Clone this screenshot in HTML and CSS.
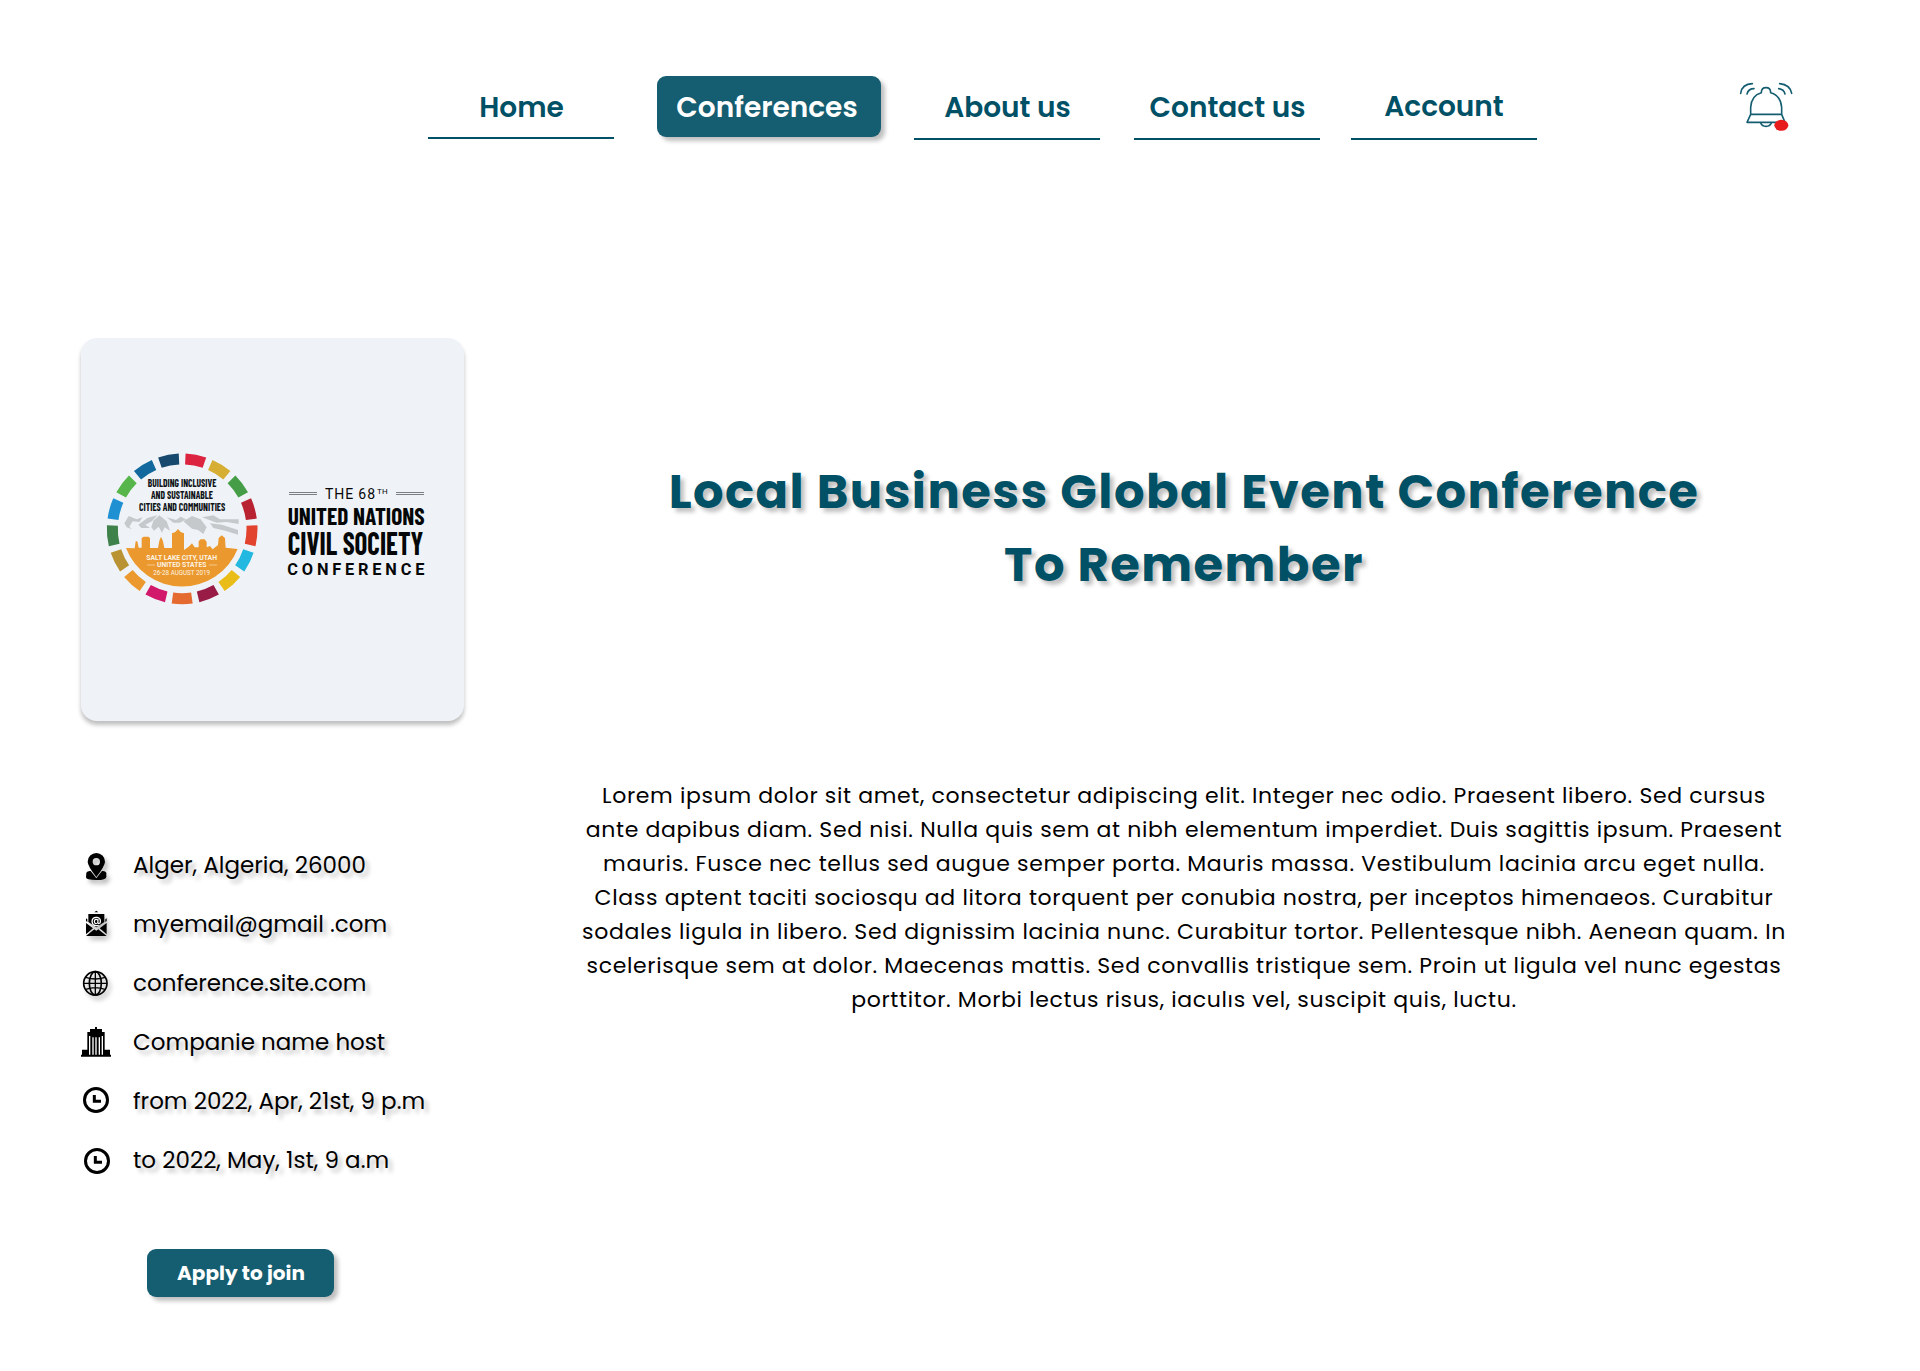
FILE: index.html
```html
<!DOCTYPE html>
<html lang="en">
<head>
<meta charset="utf-8">
<title>Local Business Global Event Conference</title>
<link rel="stylesheet" href="styles.css">
</head>
<body>
<header class="topbar">
  <nav class="nav">
    <a class="nav-item home" href="#">Home</a>
    <a class="nav-item active" href="#">Conferences</a>
    <a class="nav-item about" href="#">About us</a>
    <a class="nav-item contact" href="#">Contact us</a>
    <a class="nav-item account" href="#">Account</a>
  </nav>
  <svg class="bell" viewBox="0 0 270 225" fill="none" stroke="#155d70" stroke-width="4.8" stroke-linecap="round" stroke-linejoin="round">
    <path d="M92 133V112Q94 76 124 68Q124 53 138 53Q152 53 152 68Q182 76 185 112V133M92 133H185L195 157H81L92 133M122 159Q126 169 138 169Q150 169 154 159"/>
    <path d="M62 70Q66 42 97 41M81 72Q85 56 102 56M179 41Q210 44 215 70M176 56Q192 58 195 72"/>
    <ellipse cx="184" cy="166" rx="21" ry="16.500" fill="#e81c1c" stroke="none"/>
  </svg>
</header>
<main class="page">
  <aside class="side">
    <svg class="logo-card" viewBox="33 24 1149 1149">
      <g id="ring" fill="none" stroke-width="33"></g>
      <g fill="#c5c9cc"><path d="M163 580L176 558L200 568L218 562L208 576L188 574L178 590L186 598L170 592ZM205 584L232 564L262 556L246 574L226 584L240 594L214 594ZM250 572L268 556L290 574L300 602L284 592L276 608L266 590L252 602L244 592ZM290 562L318 570L332 560L348 568L330 578L310 578ZM340 574L366 558L392 568L410 592L400 612L384 600L366 596ZM396 562L430 556L450 568L506 568V582L470 576L440 578ZM420 580L456 584L504 600V614L466 602L430 594Z"/></g>
      <path fill="#eb992e" d="M168 654L194 655L197 634L202 634L206 653H215V624L221 620H236L240 625V654H264L268 632L273 620L279 634L283 654H306V610L316 606L324 597L332 606L342 610V660L356 650L366 640L374 652H386V634L392 628H404L410 636V652L420 648L428 658L444 645L446 624L455 616L465 624L467 653L503 657A180 180 0 0 1 168 654Z"/>
      <g class="badge-title" fill="#101417">
        <text x="233" y="472" font-size="35" textLength="206" lengthAdjust="spacingAndGlyphs">BUILDING INCLUSIVE</text>
        <text x="243" y="507" font-size="35" textLength="186" lengthAdjust="spacingAndGlyphs">AND SUSTAINABLE</text>
        <text x="207" y="543" font-size="35" textLength="259" lengthAdjust="spacingAndGlyphs">CITIES AND COMMUNITIES</text>
      </g>
      <g class="badge-place" fill="#fdf3e4">
        <text x="229" y="691" font-size="20" textLength="212" lengthAdjust="spacingAndGlyphs">SALT LAKE CITY, UTAH</text>
        <text x="261" y="712" font-size="20" textLength="148" lengthAdjust="spacingAndGlyphs">UNITED STATES</text>
        <text class="thin" x="250" y="734" font-size="19" textLength="170" lengthAdjust="spacingAndGlyphs">26-28 AUGUST 2019</text>
        <path d="M231 704H255V706H231ZM417 704H441V706H417Z"/>
      </g>
      <g class="wordmark" fill="#050708">
        <path shape-rendering="crispEdges" fill="#7c8082" d="M657 486H742V489H657ZM657 492H742V495H657ZM978 486H1063V489H978ZM978 492H1063V495H978Z"/>
        <text class="light" x="765" y="506" font-size="42" textLength="150" lengthAdjust="spacing">THE 68</text>
        <text class="light" x="921" y="492" font-size="24" textLength="32" lengthAdjust="spacing">TH</text>
        <text class="narrow" x="653" y="585" font-size="74" textLength="411" lengthAdjust="spacingAndGlyphs">UNITED NATIONS</text>
        <text class="narrow" x="653" y="675" font-size="96" textLength="407" lengthAdjust="spacingAndGlyphs">CIVIL SOCIETY</text>
        <text x="652" y="735" font-size="49" textLength="411" lengthAdjust="spacing">CONFERENCE</text>
      </g>
    </svg>
    <ul class="facts">
      <li><svg viewBox="27 -12 108 177"><path fill-rule="evenodd" d="M79 39A26 26 0 0 1 105 65Q105 77 79 111Q53 77 53 65A26 26 0 0 1 79 39ZM79 54A11 11 0 1 0 79 76A11 11 0 1 0 79 54Z"/><path d="M49 98Q52 92 62 93L79 115L96 93Q106 92 109 98V110Q109 120 79 120Q48 120 48 112Z"/></svg>Alger, Algeria, 26000</li>
      <li><svg viewBox="27 165 108 177"><path d="M73 217L79 212L85 217ZM55 222H103V246L79 262L55 246ZM48 235L52 238V246L48 243ZM110 235L106 238V246L110 243ZM48 249L69 265L48 283ZM110 249L89 265L110 283ZM48 288L73 268L79 272L85 268L110 288Z"/><text class="at" x="79" y="252" text-anchor="middle" font-size="31" fill="#fff">@</text></svg>myemail@gmail .com</li>
      <li><svg viewBox="27 342 108 177" fill="none" stroke="#000" stroke-width="5"><circle cx="76" cy="430" r="35"/><ellipse cx="76" cy="430" rx="18" ry="35"/><path d="M76 395V465M41 430H111M47 412Q76 422 105 412M47 448Q76 438 105 448" stroke-width="4"/></svg>conference.site.com</li>
      <li><svg class="flat" viewBox="27 9 108 177"><path fill-rule="evenodd" d="M75 51H81V57H96V66H104V119H120V134H123V140H33V134H36V119H52V66H60V57H75ZM57 78V134H61V78ZM67 82V134H71V82ZM76 82V134H80V82ZM86 82V134H90V82ZM95 78V134H99V78Z"/></svg>Companie name host</li>
      <li><svg class="flat" viewBox="27 186 108 177" fill="none" stroke="#000" stroke-width="9"><circle cx="78" cy="270" r="34.500"/><path d="M73 255V273.500H93"/></svg>from 2022, Apr, 21st, 9 p.m</li>
      <li><svg class="flat" viewBox="27 363 108 177" fill="none" stroke="#000" stroke-width="9"><circle cx="81" cy="453" r="34.500"/><path d="M76 438V456.500H96"/></svg>to 2022, May, 1st, 9 a.m</li>
    </ul>
    <button class="apply">Apply to join</button>
  </aside>
  <article class="content">
    <h1>Local Business Global Event Conference<br>To Remember</h1>
    <p class="body">Lorem ipsum dolor sit amet, consectetur adipiscing elit. Integer nec odio. Praesent libero. Sed cursus<br>
    ante dapibus diam. Sed nisi. Nulla quis sem at nibh elementum imperdiet. Duis sagittis ipsum. Praesent<br>
    mauris. Fusce nec tellus sed augue semper porta. Mauris massa. Vestibulum lacinia arcu eget nulla.<br>
    Class aptent taciti sociosqu ad litora torquent per conubia nostra, per inceptos himenaeos. Curabitur<br>
    sodales ligula in libero. Sed dignissim lacinia nunc. Curabitur tortor. Pellentesque nibh. Aenean quam. In<br>
    scelerisque sem at dolor. Maecenas mattis. Sed convallis tristique sem. Proin ut ligula vel nunc egestas<br>
    porttitor. Morbi lectus risus, iaculıs vel, suscipit quis, luctu.</p>
  </article>
</main>
<script src="ring.js"></script>
</body>
</html>
```
FILE: styles.css
```css
* { box-sizing: border-box; }
body {
  margin: 0;
  width: 1920px;
  height: 1371px;
  overflow: hidden;
  background: #fff;
  color: #000;
  font-family: Poppins, Inter, sans-serif;
}
.topbar { display: flex; height: 338px; padding: 70px 0 0 428px; }
.nav { display: flex; height: 70px; }
.nav-item {
  width: 186px;
  height: 69px;
  color: #005066;
  font-size: 28px;
  font-weight: 600;
  line-height: 75px;
  text-align: center;
  text-decoration: none;
  white-space: nowrap;
  border-bottom: 2px solid #005066;
}
.home, .about, .contact { padding-left: 1px; }
.about, .contact, .account { height: 70px; }
.active {
  width: 224px;
  height: 61px;
  margin: 6px 0 0 43px;
  padding-right: 4px;
  line-height: 63px;
  color: #fff;
  background: #155d70;
  border: 0;
  border-radius: 9px;
  box-shadow: 4px 4px 4px rgba(0, 0, 0, .25);
}
.about { margin-left: 33px; }
.contact { margin-left: 34px; }
.account { margin-left: 31px; line-height: 73px; }
.bell { width: 90px; height: 75px; margin-left: 183px; }
.page { display: flex; padding-left: 81px; }
.side { width: 383px; }
.logo-card {
  display: block;
  width: 383px;
  height: 383px;
  background: #eff3f7;
  border-radius: 16px;
  box-shadow: 0 4px 4px rgba(0, 0, 0, .25);
}
.logo-card text { font-family: Roboto, sans-serif; }
.logo-card .badge-title text,
.logo-card .narrow { font-family: "Barlow Condensed", "Roboto Condensed", Roboto, sans-serif; font-weight: 700; }
.wordmark, .badge-place { font-weight: 700; }
.logo-card .thin, .logo-card .light { font-weight: 400; }
.facts { list-style: none; margin: 115px 0 0; padding: 0; }
.facts li {
  display: flex;
  height: 59px;
  margin-left: -2px;
  font-size: 23px;
  line-height: 58px;
  white-space: nowrap;
  text-shadow: 4px 4px 4px rgba(0, 0, 0, .25);
}
.facts svg {
  width: 36px;
  height: 59px;
  margin-right: 18px;
  filter: drop-shadow(3px 4px 2px rgba(0, 0, 0, .25));
}
.facts .flat { filter: none; }
.at { font-family: Inter, sans-serif; font-weight: 700; text-shadow: none; }
.apply {
  display: block;
  width: 187px;
  height: 48px;
  margin: 59px 0 0 66px;
  padding: 0 0 0 1px;
  color: #fff;
  background: #155d70;
  border: 0;
  border-radius: 9px;
  box-shadow: 4px 4px 4px rgba(0, 0, 0, .25);
  font: 700 20px/48px Poppins, Inter, sans-serif;
  white-space: nowrap;
}
.content { width: 1240px; margin-left: 100px; text-align: center; white-space: nowrap; }
h1 {
  margin: 117px 0 0;
  color: #005066;
  font-size: 48px;
  font-weight: 700;
  letter-spacing: .03em;
  line-height: 73px;
  text-shadow: 4px 4px 4px rgba(0, 0, 0, .25);
}
.body { margin: 177.5px 0 0; font-size: 22px; letter-spacing: .03em; line-height: 34px; }
```
FILE: ring.js
```js
// Seventeen coloured arcs, clockwise from the top of the badge.
const colors = ["#dc2340", "#d6ae34", "#469d48", "#b92230", "#e2432e", "#22b8e0", "#e9bc18", "#981c45", "#e56a2f", "#d2186b", "#eb992e", "#b99333", "#3e814a", "#1f91d2", "#56b64b", "#13699e", "#16496d"];
const r = 209.5, cx = 336.5, cy = 596.5;
const pt = d => {
  const a = d * Math.PI / 180;
  return (cx + r * Math.sin(a)).toFixed(1) + " " + (cy - r * Math.cos(a)).toFixed(1);
};
document.getElementById("ring").innerHTML = colors.map((c, i) => {
  const mid = (i + 0.5) * 360 / 17;
  return `<path stroke="${c}" d="M${pt(mid - 8)}A${r} ${r} 0 0 1 ${pt(mid + 8)}"/>`;
}).join("");
```
